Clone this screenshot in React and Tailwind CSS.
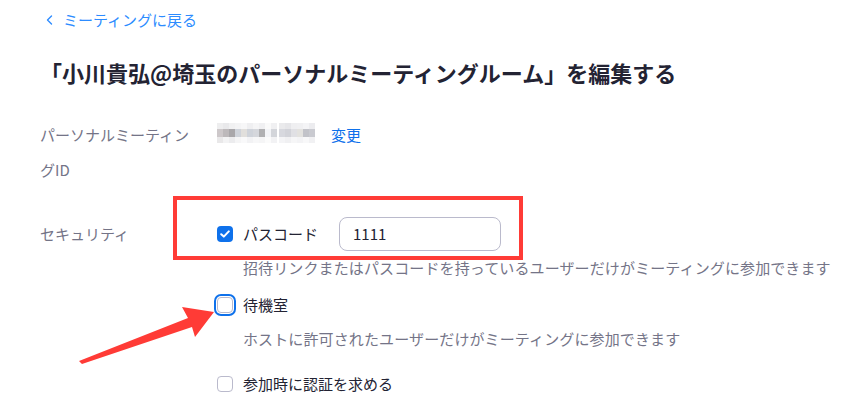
import React from "react";

const mosaicTop = ["bg-[#eeeeef]", "bg-[#e9e9eb]", "bg-[#f1f1f2]", "bg-[#f4f4f5]", "bg-[#f7f7f8]", "bg-[#efeff1]", "bg-[#f5f5f6]", "bg-[#f0f0f2]", "bg-[#fafafa]", "bg-[#f0f0f2]"];
const mosaicMid = ["bg-[#cdc8ca]", "bg-[#bdb9bb]", "bg-[#a9a7aa]", "bg-[#cfd3da]", "bg-[#e1dfdc]", "bg-[#cfd3da]", "bg-[#d5d7dc]", "bg-[#b0b0b2]", "bg-[#f3f4f7]", "bg-[#d3d5da]"];
const mosaicBot = ["bg-[#e9e8e9]", "bg-[#f3f3f4]", "bg-[#ececee]", "bg-[#f5f5f6]", "bg-[#f9f9fa]", "bg-[#f2f2f4]", "bg-[#f7f7f8]", "bg-[#f5f5f6]", "bg-[#fbfbfb]", "bg-[#f2f2f4]"];
const mosaicTop2 = ["bg-[#eaeaec]", "bg-[#e6e6e9]", "bg-[#efeff1]", "bg-[#f0f0f2]", "bg-[#f4f4f6]", "bg-[#ececef]"];
const mosaicMid2 = ["bg-[#d7d8de]", "bg-[#d2d3d9]", "bg-[#e0e0e4]", "bg-[#e3e2df]", "bg-[#c2c3c9]", "bg-[#c9cad0]"];
const mosaicBot2 = ["bg-[#f4f4f6]", "bg-[#f0f0f2]", "bg-[#f6f6f7]", "bg-[#f3f3f5]", "bg-[#f8f8f9]", "bg-[#f1f1f3]"];

function Mosaic({ top, mid, bot }) {
  return (
    <div className="flex flex-col">
      <div className="flex">{top.map((c, i) => <div key={i} className={`w-[6px] h-[6px] ${c}`} />)}</div>
      <div className="flex">{mid.map((c, i) => <div key={i} className={`w-[6px] h-[8px] ${c}`} />)}</div>
      <div className="flex">{bot.map((c, i) => <div key={i} className={`w-[6px] h-[6px] ${c}`} />)}</div>
    </div>
  );
}

function CheckedBox() {
  return (
    <div className="w-4 h-4 rounded-[4px] bg-[#0e71eb] flex items-center justify-center shrink-0">
      <svg width="10" height="8" viewBox="0 0 10 8" fill="none">
        <path d="M1.2 4.2 L3.8 6.6 L8.8 1.4" stroke="white" strokeWidth="2" strokeLinecap="round" strokeLinejoin="round" />
      </svg>
    </div>
  );
}

function EmptyBox({ focused }) {
  return (
    <div
      className={
        focused
          ? "w-4 h-4 rounded-[4px] border border-[#babacc] bg-white shrink-0 ring-2 ring-[#0e71eb] ring-offset-1"
          : "w-4 h-4 rounded-[4px] border border-[#babacc] bg-white shrink-0"
      }
    />
  );
}

export default function App() {
  return (
    <div className="relative w-[848px] h-[417px] overflow-hidden bg-white font-['Noto_Sans_CJK_JP',sans-serif] text-[15px] text-[#232333]">
      <div className="pl-[40px] pt-[10px]">
        {/* back link */}
        <a className="flex items-center h-[20px] text-[#2d8cff] text-[15px] leading-[20px]">
          <svg className="ml-[6px] mr-[10px]" width="7" height="10" viewBox="0 0 7 10" fill="none">
            <path d="M5.5 1 L1.5 5 L5.5 9" stroke="#2d8cff" strokeWidth="1.4" strokeLinecap="round" strokeLinejoin="round" />
          </svg>
          ミーティングに戻る
        </a>

        <h1 className="mt-[26px] text-[22px] leading-[32px] font-bold">
          「小川貴弘@埼玉のパーソナルミーティングルーム」を編集する
        </h1>

        {/* personal meeting id */}
        <div className="flex mt-[29px]">
          <div className="w-[177px] pr-[20px] leading-[35px] text-[#747487]">パーソナルミーティングID</div>
          <div className="flex items-start h-[35px] pt-[6px]">
            <div className="flex gap-[2px]">
              <Mosaic top={mosaicTop} mid={mosaicMid} bot={mosaicBot} />
              <Mosaic top={mosaicTop2} mid={mosaicMid2} bot={mosaicBot2} />
            </div>
            <a className="ml-[16px] -mt-[6px] leading-[35px] text-[#0e71eb]">変更</a>
          </div>
        </div>

        {/* security */}
        <div className="flex mt-[30px]">
          <div className="w-[177px] leading-[34px] text-[#747487]">セキュリティ</div>
          <div className="flex flex-col">
            <div className="flex items-center h-[34px]">
              <CheckedBox />
              <span className="ml-[10px] leading-[20px]">パスコード</span>
              <div className="ml-[21px] w-[162px] h-[34px] rounded-[8px] border border-[#babacc] flex items-center pl-[13px] leading-[20px]">
                1111
              </div>
            </div>
            <div className="mt-[7px] pl-[26px] leading-[20px] text-[#747487] whitespace-nowrap tracking-[0.12px]">
              招待リンクまたはパスコードを持っているユーザーだけがミーティングに参加できます
            </div>
            <div className="mt-[17px] flex items-center h-[20px]">
              <EmptyBox focused />
              <span className="ml-[10px] leading-[20px]">待機室</span>
            </div>
            <div className="mt-[14px] pl-[26px] leading-[20px] text-[#747487] whitespace-nowrap tracking-[0.12px]">
              ホストに許可されたユーザーだけがミーティングに参加できます
            </div>
            <div className="mt-[25px] flex items-center h-[20px]">
              <EmptyBox />
              <span className="ml-[10px] leading-[20px]">参加時に認証を求める</span>
            </div>
          </div>
        </div>
      </div>

      {/* annotation: red box */}
      <div className="absolute left-[173px] top-[196px] w-[350px] h-[64px] border-4 border-[#ff3b36] pointer-events-none" />

      {/* annotation: red arrow */}
      <svg className="absolute left-0 top-0 pointer-events-none" width="848" height="417" viewBox="0 0 848 417">
        <polygon points="79,361 188,318 182,307 214,312 195,337 192,327 82,364" fill="#ff3b36" />
      </svg>
    </div>
  );
}
